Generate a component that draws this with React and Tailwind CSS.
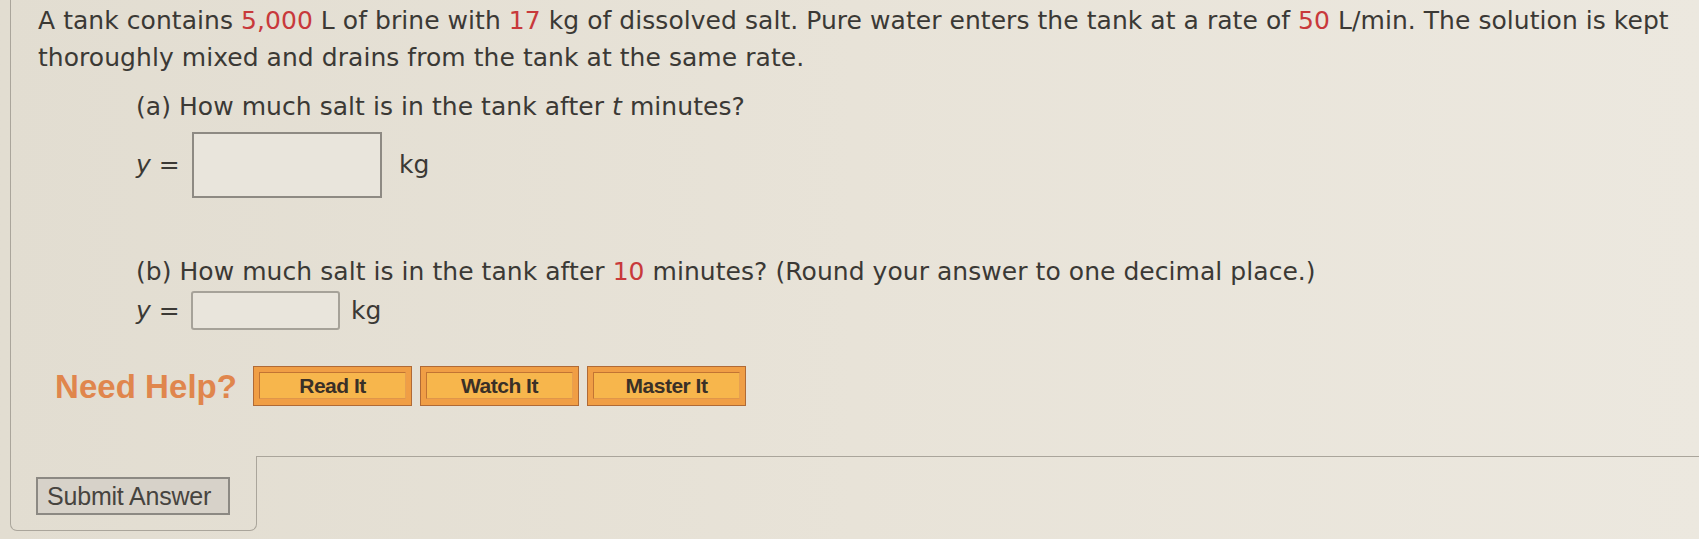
export default function App() {
  const red = 'text-[#c8393b]'
  return (
    <div className="w-[1699px] h-[539px] overflow-hidden bg-linear-to-r from-[#e2ddd1] via-[#e8e3d8] to-[#ece8df] text-[#3b3935]">
      <div className="ml-[10px] h-full flex flex-col">
        <div className="flex-1 border-l border-[#aaa59b] font-['DejaVu_Sans',sans-serif] text-[25px] tracking-[0.05px]">
          <p className="pt-[2px] pl-[27px] leading-[37px] whitespace-nowrap">
            A tank contains <span className={red}>5,000</span> L of brine with <span className={red}>17</span> kg of dissolved salt. Pure water enters the tank at a rate of <span className={red}>50</span> L/min. The solution is kept
            <br />
            thoroughly mixed and drains from the tank at the same rate.
          </p>

          <div className="pl-[125px]">
            <p className="mt-[12px] leading-[37px] whitespace-nowrap">
              (a) How much salt is in the tank after <i>t</i> minutes?
            </p>
            <div className="mt-[7px] flex items-center h-[66px]">
              <span className="w-[56px] whitespace-nowrap"><i>y</i> =</span>
              <div className="w-[190px] h-[66px] border-2 border-[#8e8a83] bg-[#e9e5dc]" />
              <span className="ml-[17px]">kg</span>
            </div>

            <p className="mt-[55px] leading-[37px] whitespace-nowrap">
              (b) How much salt is in the tank after <span className={red}>10</span> minutes? (Round your answer to one decimal place.)
            </p>
            <div className="mt-px flex items-center h-[39px]">
              <span className="w-[55px] whitespace-nowrap"><i>y</i> =</span>
              <div className="w-[149px] h-[39px] border-2 border-[#a6a299] rounded-[3px] bg-[#e9e5dc]" />
              <span className="ml-[11px]">kg</span>
            </div>
          </div>

          <div className="mt-[36px] h-[40px] flex items-center font-['Liberation_Sans',Arial,sans-serif]">
            <span className="ml-[44px] w-[198px] text-[33px] font-bold text-[#e0864d] leading-none">Need Help?</span>
            <div className="flex gap-[8px]">
              {['Read It', 'Watch It', 'Master It'].map(label => (
                <div key={label} className="w-[159px] h-[40px] border border-[#b06a36] bg-[#f09e45] pt-[5px] px-[5px] pb-[6px]">
                  <div className="h-full border border-t-[#c27433] border-l-[#c27433] border-r-[#e7a050] border-b-[#e0964a] bg-[#f7b64c] flex items-center justify-center">
                    <span className="text-[21px] font-bold text-[#3a3027] leading-none tracking-[-0.5px]">{label}</span>
                  </div>
                </div>
              ))}
            </div>
          </div>
        </div>

        <div className="flex h-[75px] mb-[8px]">
          <div className="w-[247px] border-l border-r border-b border-[#aaa59b] rounded-b-[7px] pt-[21px] pl-[25px]">
            <button className="w-[194px] h-[38px] border-2 border-[#8c8983] bg-[#d7d2c9] text-left pl-[9px] font-['Liberation_Sans',Arial,sans-serif] text-[25px] text-[#47443f] leading-none tracking-[-0.2px]">
              Submit Answer
            </button>
          </div>
          <div className="flex-1 border-t border-[#aaa59b]" />
        </div>
      </div>
    </div>
  )
}
